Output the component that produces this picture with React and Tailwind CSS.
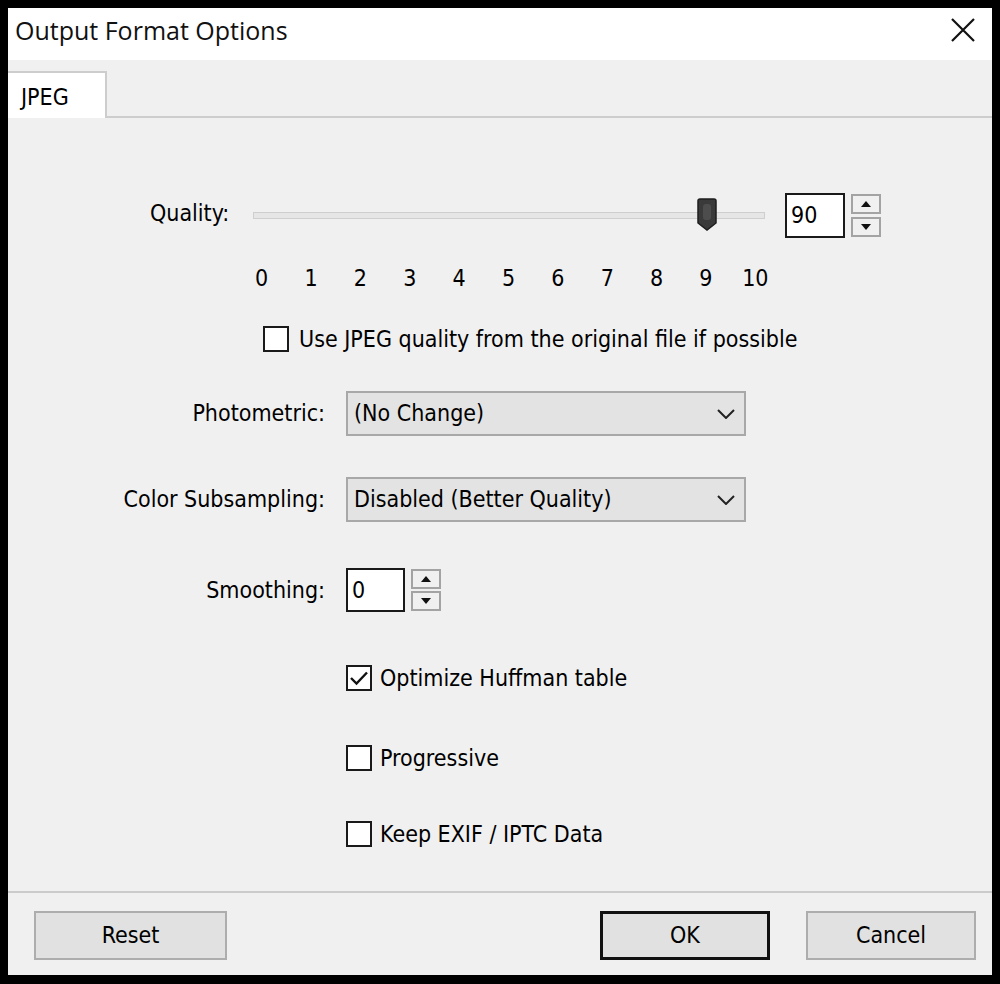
// App.jsx — Output Format Options (JPEG) dialog

const body = { fontFamily: '"DejaVu Sans Condensed", "DejaVu Sans", sans-serif' }
const title = { fontFamily: '"Open Sans", "Noto Sans", sans-serif' }

// ── Small pieces ─────────────────────────────────────────
function Checkbox({ checked }) {
  return (
    <div className="w-[26px] h-[26px] bg-white border-2 border-[#1a1a1a] flex items-center justify-center shrink-0">
      {checked && (
        <svg width="20" height="16" viewBox="0 0 20 16">
          <path d="M2 8 L7.5 13.5 L18 2.5" fill="none" stroke="#111" strokeWidth="2.4" />
        </svg>
      )}
    </div>
  )
}

function Spinner({ h }) {
  const btn = 'w-[30px] bg-[#f0f0f0] border-2 border-[#a3a3a3] flex items-center justify-center'
  return (
    <div className="flex flex-col justify-between ml-[6px]" style={{ height: h }}>
      <div className={`${btn} h-[20px]`}>
        <svg width="10" height="6" viewBox="0 0 10 6"><path d="M0 6 L5 0 L10 6 Z" fill="#111" /></svg>
      </div>
      <div className={`${btn} h-[20px]`}>
        <svg width="10" height="6" viewBox="0 0 10 6"><path d="M0 0 L5 6 L10 0 Z" fill="#111" /></svg>
      </div>
    </div>
  )
}

function Select({ value }) {
  return (
    <div className="w-[400px] h-[45px] bg-[#e3e3e3] border-2 border-[#a8a8a8] flex items-center justify-between pl-[6px] pr-[9px]">
      <span className="text-[23px] text-black leading-none">{value}</span>
      <svg width="18" height="10" viewBox="0 0 18 10">
        <path d="M1 1 L9 9 L17 1" fill="none" stroke="#222" strokeWidth="2" />
      </svg>
    </div>
  )
}

function Label({ children }) {
  return <div className="w-[317px] text-right text-[23px] text-black leading-none">{children}</div>
}

function Button({ children, w, primary }) {
  return (
    <div
      className={`h-[49px] bg-[#e1e1e1] flex items-center justify-center text-[23px] text-black
        ${primary ? 'border-[3px] border-[#111]' : 'border-2 border-[#adadad]'}`}
      style={{ width: w }}
    >
      {children}
    </div>
  )
}

export default function App() {
  const ticks = [0, 1, 2, 3, 4, 5, 6, 7, 8, 9, 10]

  return (
    <div className="w-[1000px] h-[984px] bg-black pt-[8px] pl-[8px] pr-[8px] pb-[9px]" style={body}>
      <div className="w-full h-full flex flex-col bg-[#f0f0f0]">

        {/* Barra de título */}
        <div className="h-[52px] bg-white flex items-center justify-between pl-[7px] pr-[16px] pb-[8px] shrink-0">
          <span className="text-[25px] text-[#111] leading-none" style={title}>Output Format Options</span>
          <svg width="26" height="26" viewBox="0 0 26 26">
            <path d="M2 2 L24 24 M24 2 L2 24" stroke="#111" strokeWidth="2.2" />
          </svg>
        </div>

        {/* Pestañas */}
        <div className="h-[58px] border-b-2 border-[#cdcdcd] flex items-end shrink-0">
          <div className="w-[99px] h-[47px] bg-white border-t-2 border-r-2 border-[#cdcdcd] -mb-[2px] flex items-center pl-[13px] pt-[4px]">
            <span className="text-[23px] text-black leading-none">JPEG</span>
          </div>
        </div>

        {/* Panel */}
        <div className="flex-1 flex flex-col">

          {/* Quality */}
          <div className="mt-[75px] h-[45px] flex items-center ml-[142px]">
            <div className="w-[103px] text-[23px] text-black leading-none -mt-[4px]">Quality:</div>
            <div className="w-[512px] h-[34px] relative -mt-[2px]">
              <div className="absolute left-0 right-0 top-[14px] h-[7px] bg-[#e6e6e6] border border-[#cfcfcf]" />
              <svg className="absolute left-[444px] top-0" width="20" height="33" viewBox="0 0 20 33">
                <path d="M1 3 Q1 1 3 1 H17 Q19 1 19 3 V25 L10 32 L1 25 Z" fill="#3a3a3a" stroke="#1e1e1e" strokeWidth="1.5" />
                <rect x="6" y="6" width="8" height="16" rx="3" fill="#4d4d4d" />
              </svg>
            </div>
            <div className="ml-[20px] w-[60px] h-[45px] bg-white border-2 border-[#1a1a1a] flex items-center pl-[4px]">
              <span className="text-[23px] text-black leading-none">90</span>
            </div>
            <Spinner h={43} />
          </div>

          {/* Escala */}
          <div className="mt-[25px] h-[30px] ml-[229px] w-[543px] grid grid-cols-11 items-center">
            {ticks.map((t) => (
              <div key={t} className="text-center text-[23px] text-black leading-none">{t}</div>
            ))}
          </div>

          {/* Use JPEG quality */}
          <div className="mt-[32px] h-[28px] flex items-center ml-[255px] gap-[10px]">
            <Checkbox />
            <span className="text-[23px] text-black leading-none">Use JPEG quality from the original file if possible</span>
          </div>

          {/* Photometric */}
          <div className="mt-[38px] h-[45px] flex items-center gap-[21px]">
            <Label>Photometric:</Label>
            <Select value="(No Change)" />
          </div>

          {/* Color Subsampling */}
          <div className="mt-[41px] h-[45px] flex items-center gap-[21px]">
            <Label>Color Subsampling:</Label>
            <Select value="Disabled (Better Quality)" />
          </div>

          {/* Smoothing */}
          <div className="mt-[46px] h-[44px] flex items-center">
            <Label>Smoothing:</Label>
            <div className="ml-[21px] w-[59px] h-[44px] bg-white border-2 border-[#1a1a1a] flex items-center pl-[4px]">
              <span className="text-[23px] text-black leading-none">0</span>
            </div>
            <Spinner h={42} />
          </div>

          {/* Opciones */}
          {[
            ['Optimize Huffman table', true, 'mt-[52px]'],
            ['Progressive', false, 'mt-[52px]'],
            ['Keep EXIF / IPTC Data', false, 'mt-[48px]'],
          ].map(([txt, chk, mt]) => (
            <div key={txt} className={`${mt} h-[28px] flex items-center ml-[338px] gap-[8px]`}>
              <Checkbox checked={chk} />
              <span className="text-[23px] text-black leading-none">{txt}</span>
            </div>
          ))}
        </div>

        {/* Botones */}
        <div className="h-[84px] border-t-2 border-[#cbcbcb] flex items-start pt-[18px] pl-[26px] pr-[16px] shrink-0">
          <Button w={193}>Reset</Button>
          <div className="ml-auto flex gap-[36px]">
            <Button w={170} primary>OK</Button>
            <Button w={170}>Cancel</Button>
          </div>
        </div>
      </div>
    </div>
  )
}
